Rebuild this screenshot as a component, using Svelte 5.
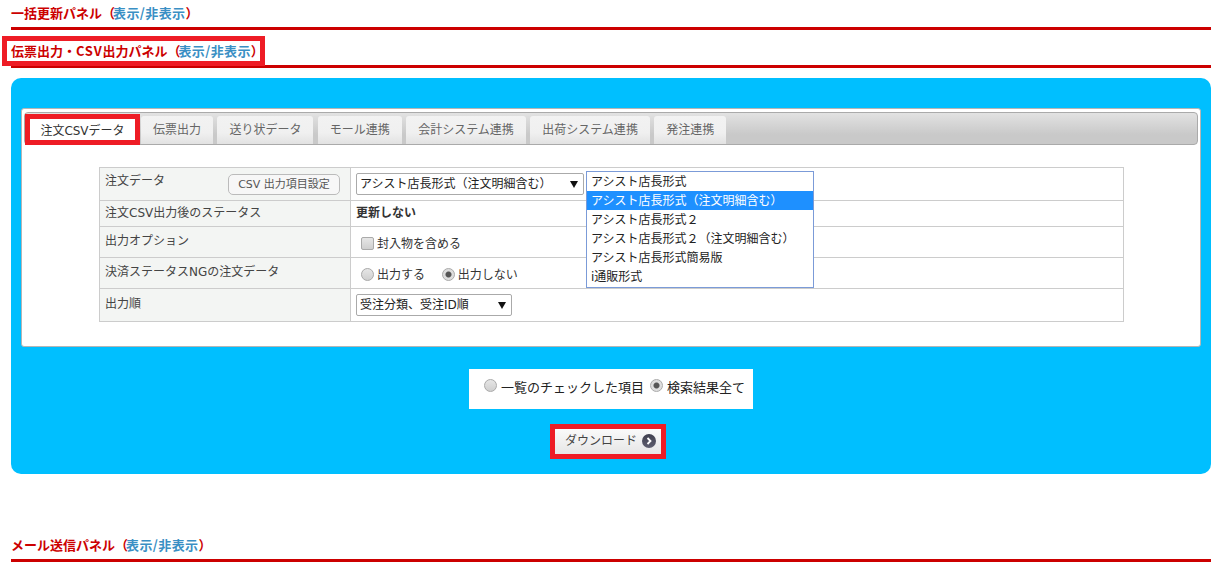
<script>
	const tabs = ['注文CSVデータ', '伝票出力', '送り状データ', 'モール連携', '会計システム連携', '出荷システム連携', '発注連携'];
	const formats = [
		'アシスト店長形式',
		'アシスト店長形式（注文明細含む）',
		'アシスト店長形式２',
		'アシスト店長形式２（注文明細含む）',
		'アシスト店長形式簡易版',
		'i通販形式'
	];
	let selected = 1;
</script>

<div class="page">
	<h2 class="head"><span>一括更新パネル（<a href="#a">表示/非表示</a>）</span></h2>
	<h2 class="head second"><span class="marked">伝票出力・<span class="latin">CSV</span>出力パネル（<a href="#a">表示/非表示</a>）</span></h2>

	<section class="panel">
		<div class="box">
			<ul class="tabbar">
				{#each tabs as tab, i}
					<li class="tab" class:active={i === 0}>{tab}</li>
				{/each}
			</ul>

			<table>
				<tbody>
					<tr class="r1">
						<th>
							<div class="th-flex">
								<span>注文データ</span>
								<button class="setting">CSV 出力項目設定</button>
							</div>
						</th>
						<td class="rel">
							<div class="select wide">アシスト店長形式（注文明細含む）<i></i></div>
							<ul class="dropdown">
								{#each formats as f, i}
									<li class:sel={i === selected}>{f}</li>
								{/each}
							</ul>
						</td>
					</tr>
					<tr class="r2">
						<th>注文CSV出力後のステータス</th>
						<td><b>更新しない</b></td>
					</tr>
					<tr class="r3">
						<th>出力オプション</th>
						<td class="opt"><label class="chk"><input type="checkbox" />封入物を含める</label></td>
					</tr>
					<tr class="r4">
						<th>決済ステータスNGの注文データ</th>
						<td class="opt">
							<label class="rad"><input type="radio" name="ng" />出力する</label>
							<label class="rad"><input type="radio" name="ng" checked />出力しない</label>
						</td>
					</tr>
					<tr class="r5">
						<th>出力順</th>
						<td><div class="select narrow">受注分類、受注ID順<i></i></div></td>
					</tr>
				</tbody>
			</table>
		</div>

		<div class="scope">
			<label class="rad"><input type="radio" name="scope" />一覧のチェックした項目</label>
			<label class="rad"><input type="radio" name="scope" checked />検索結果全て</label>
		</div>

		<button class="download">
			ダウンロード
			<svg width="14" height="14" viewBox="0 0 14 14">
				<defs>
					<linearGradient id="knob" x1="0" y1="0" x2="0" y2="1">
						<stop offset="0" stop-color="#3f3f4e" />
						<stop offset="1" stop-color="#5f5f70" />
					</linearGradient>
				</defs>
				<circle cx="7" cy="7" r="7" fill="url(#knob)" />
				<path d="M5.5 4 L8.5 7 L5.5 10" fill="none" stroke="#fff" stroke-width="1.8" />
			</svg>
		</button>
	</section>

	<h2 class="head third"><span>メール送信パネル（<a href="#a">表示/非表示</a>）</span></h2>
</div>

<style>
	:global(body) {
		margin: 0;
		background: #fff;
		font-family: "DejaVu Sans", "Noto Sans CJK JP", sans-serif;
		font-size: 12px;
		color: #333;
	}

	.page {
		width: 1200px;
		margin-left: 11px;
	}

	.head {
		margin: 0;
		height: 27px;
		border-bottom: 3px solid #c00;
		font-family: "Noto Sans CJK JP", sans-serif;
		font-size: 13px;
		line-height: 25px;
		font-weight: bold;
		color: #c00;
		white-space: nowrap;
	}

	.head a {
		color: #3a8fc4;
		text-decoration: none;
		margin-left: -2px;
		letter-spacing: 0.4px;
	}

	.second {
		margin-top: 8px;
	}

	.marked {
		display: block;
		position: relative;
		top: -2px;
		width: 249px;
		height: 20px;
		margin-left: -9px;
		padding-left: 4px;
		line-height: 20px;
		background: #fff;
		border: 5px solid #ee1c25;
	}

	.latin {
		letter-spacing: 0.7px;
	}

	.third {
		margin-top: 58px;
	}

	.panel {
		margin-top: 10px;
		height: 396px;
		box-sizing: border-box;
		padding: 30px 10px 0;
		background: #00bfff;
		border-radius: 10px;
		display: flex;
		flex-direction: column;
		align-items: center;
	}

	.box {
		width: 100%;
		height: 239px;
		box-sizing: border-box;
		background: #fff;
		border: 1px solid #b5b5b5;
		border-radius: 3px;
		padding: 3px 2px;
	}

	.tabbar {
		list-style: none;
		margin: 0;
		padding: 3px 0 0 4.6px;
		height: 33px;
		box-sizing: border-box;
		display: flex;
		gap: 4.4px;
		align-items: flex-end;
		border: 1px solid #aaa;
		border-radius: 4px;
		background: linear-gradient(#e2e2e2, #c9c9c9 70%);
	}

	.tab {
		height: 28px;
		box-sizing: border-box;
		padding: 0 12px;
		line-height: 29px;
		color: #666;
		background: linear-gradient(#f2f2f2, #f0f0f0 60%, #e2e2e2);
		border-radius: 3px 3px 0 0;
	}

	.tab.active {
		background: #fff;
		color: #333;
		width: 105px;
		height: 21px;
		line-height: 24px;
		padding: 0;
		text-align: center;
		white-space: nowrap;
		border-radius: 0;
		outline: 5px solid #ee1c25;
		margin: 0 1.6px 4px 0.4px;
	}

	table {
		margin: 22px 0 0 75px;
		width: 1025px;
		border-collapse: collapse;
		table-layout: fixed;
	}

	th, td {
		border: 1px solid #ccc;
		box-sizing: border-box;
		vertical-align: top;
		text-align: left;
		font-weight: normal;
		line-height: 18px;
	}

	th {
		width: 251px;
		background: #f3f5f3;
		padding: 4px 10px 0 5px;
		color: #444;
	}

	td {
		padding: 3px 5px 0;
	}

	.r1 { height: 33px; }
	.r2 { height: 26px; }
	.r3 { height: 31px; }
	.r4 { height: 31px; }
	.r5 { height: 33px; }

	.r3 th, .r4 th { padding-top: 5px; }
	.r5 th { padding-top: 6px; }
	.r2 th { padding-top: 3px; }

	.th-flex {
		display: flex;
		justify-content: space-between;
		align-items: flex-start;
	}

	.setting {
		width: 112px;
		height: 21px;
		margin-top: 2px;
		padding: 0;
		font: inherit;
		font-size: 11px;
		line-height: 18px;
		color: #555;
		background: #f7f7f7;
		border: 1px solid #bbb;
		border-radius: 5px;
	}

	.rel {
		position: relative;
	}

	.select {
		position: relative;
		height: 22px;
		box-sizing: border-box;
		margin-top: 2px;
		padding-left: 3px;
		line-height: 21px;
		border: 1px solid #aaa;
		border-radius: 2px;
		background: #fff;
		color: #222;
	}

	.select i {
		position: absolute;
		right: 5px;
		top: 7px;
		border-left: 4px solid transparent;
		border-right: 4px solid transparent;
		border-top: 7px solid #111;
	}

	.wide { width: 228px; }
	.narrow { width: 156px; }

	.dropdown {
		list-style: none;
		position: absolute;
		left: 235px;
		top: 3px;
		width: 228px;
		height: 117px;
		box-sizing: border-box;
		margin: 0;
		padding: 0;
		background: #fff;
		border: 1px solid #7b9bd8;
		z-index: 2;
		color: #222;
	}

	.dropdown li {
		height: 19px;
		line-height: 21px;
		padding-left: 4px;
	}

	.dropdown li.sel {
		background: #1e90ff;
		color: #fff;
	}

	.opt {
		padding-top: 8px;
	}

	label {
		display: inline-flex;
		align-items: center;
	}

	input {
		appearance: none;
		flex: none;
		width: 13px;
		height: 13px;
		margin: 0 3px 2px 0;
		box-sizing: border-box;
		border: 1px solid #aaa;
		background: linear-gradient(#e6e6e6, #cfcfcf);
	}

	input[type='checkbox'] {
		border-radius: 2px;
		margin-left: 5px;
	}

	input[type='radio'] {
		border-radius: 50%;
		margin-left: 5px;
	}

	input[type='radio']:checked {
		background: radial-gradient(circle, #555 0 2.5px, #ddd 3.5px);
	}

	.rad + .rad {
		margin-left: 8px;
	}

	.scope {
		margin-top: 22px;
		width: 284px;
		height: 40px;
		box-sizing: border-box;
		background: #fff;
		display: flex;
		align-items: center;
		padding: 0 0 6px 10px;
		font-size: 13px;
		color: #222;
	}

	.scope input {
		margin-right: 4px;
	}

	.scope .rad + .rad {
		margin-left: 1px;
	}

	.download {
		margin-top: 20px;
		margin-right: 6px;
		width: 106px;
		height: 25px;
		padding: 0 0 5px 5px;
		font: inherit;
		color: #444;
		background: linear-gradient(#fafafa, #e6e6e6);
		border: none;
		outline: 5px solid #ee1c25;
		display: flex;
		align-items: center;
		justify-content: center;
		gap: 5px;
	}

	.download svg {
		margin-top: 3px;
	}
</style>
